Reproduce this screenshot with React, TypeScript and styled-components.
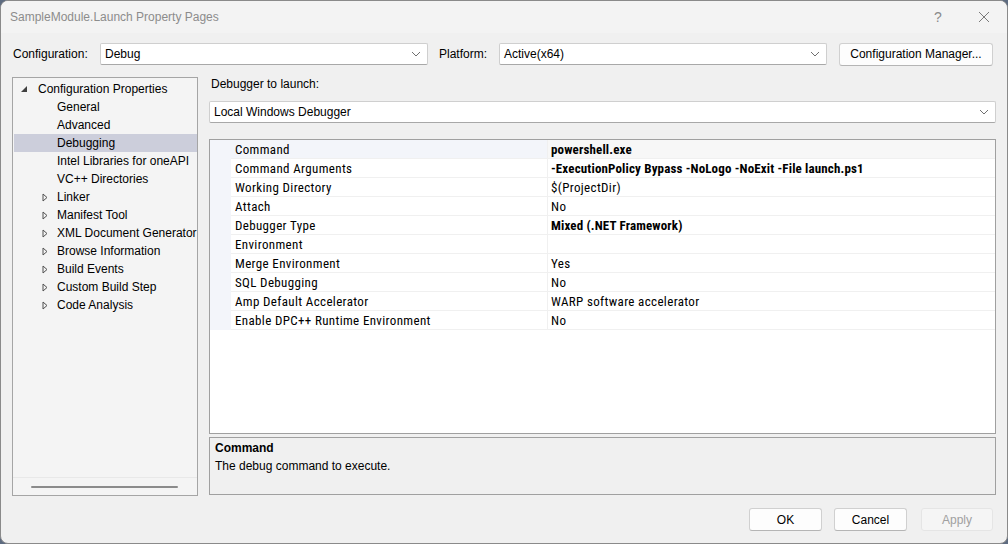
import React from "react";
import styled, { createGlobalStyle } from "styled-components";

const Global = createGlobalStyle`
  html, body { margin: 0; padding: 0; }
  body { background: #5d6b80; width: 1008px; height: 544px; overflow: hidden;
    font-family: "Segoe UI", "Liberation Sans", Arial, sans-serif; font-size: 12px; color: #000; }
`;

const Window = styled.div`
  width: 1006px; height: 542px; background: #f0f0f0; border: 1px solid #8a8a8a;
  border-radius: 8px; overflow: hidden; display: flex; flex-direction: column;
`;
const TitleBar = styled.div`
  height: 32px; display: flex; align-items: center; padding-left: 9px;
  background: #f3f3f3; color: #8c8c8c; font-size: 12px;
`;
const TitleText = styled.div` flex: 1; `;
const TitleBtn = styled.div<{ $big?: boolean }>`
  width: 46px; height: 32px; display: flex; align-items: center; justify-content: center; color: #8a8a8a;
  font-size: ${p => (p.$big ? 14 : 12)}px;
`;
const Body = styled.div`
  flex: 1; display: flex; flex-direction: column; padding: 9px 11px 12px 11px;
`;
const ConfigRow = styled.div`
  display: flex; align-items: center; height: 24px;
`;
const Label = styled.span<{ $w: number; $ml?: number }>`
  width: ${p => p.$w}px; padding-left: 1px; margin-left: ${p => p.$ml ?? 0}px; box-sizing: border-box;
`;
const Combo = styled.div<{ $w?: number }>`
  ${p => (p.$w ? `width: ${p.$w}px;` : "flex: 1;")}
  height: 20px; border: 1px solid #cfcfcf; border-bottom-color: #a8a8a8; background: #fff;
  border-radius: 2px; display: flex; align-items: center; padding: 0 0 0 4px; box-sizing: content-box;
`;
const ComboText = styled.span` flex: 1; `;
const Chevron = () => (
  <svg width="22" height="20" viewBox="0 0 22 20"><path d="M7 8 L11 12 L15 8" fill="none" stroke="#707070" strokeWidth="1" /></svg>
);
const Button = styled.button<{ $disabled?: boolean; $w: number; $ml?: number }>`
  font: inherit; height: 23px; width: ${p => p.$w}px; margin-left: ${p => p.$ml ?? 0}px; border-radius: 3px;
  background: ${p => (p.$disabled ? "#f5f5f5" : "#fdfdfd")};
  border: 1px solid ${p => (p.$disabled ? "#e5e5e5" : "#d0d0d0")};
  border-bottom-color: ${p => (p.$disabled ? "#e5e5e5" : "#b5b5b5")};
  color: ${p => (p.$disabled ? "#a0a0a0" : "#000")}; padding: 0;
`;
const Main = styled.div`
  flex: 1; display: flex; margin-top: 11px; gap: 11px;
`;
const Tree = styled.div`
  width: 184px; border: 1px solid #a5a5a5; background: #f4f4f4; display: flex; flex-direction: column;
`;
const TreeList = styled.div` flex: 1; padding-top: 2px; padding-left: 1px; `;
const TreeItem = styled.div<{ $pad: number; $sel?: boolean }>`
  height: 18px; display: flex; align-items: center; padding-left: ${p => p.$pad}px;
  background: ${p => (p.$sel ? "#cccedb" : "transparent")}; white-space: nowrap;
`;
const Twisty = styled.span<{ $mr: number }>`
  width: 14px; margin-right: ${p => p.$mr}px; display: inline-flex; align-items: center; justify-content: center;
`;
const HScroll = styled.div`
  height: 17px; border-top: 1px solid #e8e8e8; display: flex; align-items: center; padding-left: 18px;
`;
const Thumb = styled.div` width: 147px; height: 2px; background: #8b8b8b; border-radius: 1px; `;
const Right = styled.div` flex: 1; display: flex; flex-direction: column; `;
const SmallLabel = styled.div` height: 16px; padding-left: 2px; `;
const ComboRow = styled.div` display: flex; margin-top: 8px; `;
const Grid = styled.div`
  margin-top: 16px; height: 293px; border: 1px solid #a0a0a0; background: #fff; display: flex; flex-direction: column;
`;
const GridRow = styled.div`
  height: 19px; display: flex; font-family: "Roboto Condensed", "Liberation Sans Narrow", "Liberation Sans", sans-serif;
  font-size: 13px;
`;
const Margin = styled.div` width: 21px; background: #f3f5fa; `;
const NameCell = styled.div<{ $sel?: boolean }>`
  width: 312px; padding-left: 4px; display: flex; align-items: center; border-bottom: 1px solid #f0f0f0;
  background: ${p => (p.$sel ? "#f3f5fa" : "#fff")}; border-right: 1px solid #f0f0f0; letter-spacing: 0.35px;
  padding-top: 1px;
`;
const ValueCell = styled.div<{ $bold?: boolean; $sel?: boolean }>`
  flex: 1; padding-left: 3px; display: flex; align-items: center; border-bottom: 1px solid #f0f0f0;
  font-weight: ${p => (p.$bold ? 700 : 400)}; background: ${p => (p.$sel ? "#f7f7f7" : "#fff")};
  letter-spacing: ${p => (p.$bold ? 0.15 : 0.35)}px; padding-top: 1px;
`;
const Fill = styled.div` flex: 1; `;
const Desc = styled.div`
  margin-top: 3px; height: 58px; border: 1px solid #a0a0a0; background: #f0f0f0; padding: 3px 5px; box-sizing: border-box;
`;
const DescTitle = styled.div` font-weight: 700; height: 18px; `;
const Footer = styled.div`
  display: flex; justify-content: flex-end; margin-top: 12px; padding-right: 3px;
`;

const treeChildren = ["General", "Advanced", "Debugging", "Intel Libraries for oneAPI", "VC++ Directories"];
const treeGroups = ["Linker", "Manifest Tool", "XML Document Generator", "Browse Information", "Build Events", "Custom Build Step", "Code Analysis"];

const rows: [string, string, boolean?][] = [
  ["Command", "powershell.exe", true],
  ["Command Arguments", "-ExecutionPolicy Bypass -NoLogo -NoExit -File launch.ps1", true],
  ["Working Directory", "$(ProjectDir)"],
  ["Attach", "No"],
  ["Debugger Type", "Mixed (.NET Framework)", true],
  ["Environment", ""],
  ["Merge Environment", "Yes"],
  ["SQL Debugging", "No"],
  ["Amp Default Accelerator", "WARP software accelerator"],
  ["Enable DPC++ Runtime Environment", "No"],
];

export default function App() {
  return (
    <>
      <Global />
      <Window>
        <TitleBar>
          <TitleText>SampleModule.Launch Property Pages</TitleText>
          <TitleBtn $big>?</TitleBtn>
          <TitleBtn>
            <svg width="12" height="12" viewBox="0 0 12 12"><path d="M1 1 L11 11 M11 1 L1 11" stroke="#7a7a7a" strokeWidth="1" /></svg>
          </TitleBtn>
        </TitleBar>
        <Body>
          <ConfigRow>
            <Label $w={88}>Configuration:</Label>
            <Combo $w={322}><ComboText>Debug</ComboText><Chevron /></Combo>
            <Label $w={61} $ml={10}>Platform:</Label>
            <Combo $w={322}><ComboText>Active(x64)</ComboText><Chevron /></Combo>
            <Button $w={154} $ml={12}>Configuration Manager...</Button>
          </ConfigRow>
          <Main>
            <Tree>
              <TreeList>
                <TreeItem $pad={3}>
                  <Twisty $mr={7}>
                    <svg width="8" height="8" viewBox="0 0 8 8"><path d="M7 1 L7 7 L1 7 Z" fill="#404040" /></svg>
                  </Twisty>
                  Configuration Properties
                </TreeItem>
                {treeChildren.map(t => (
                  <TreeItem key={t} $pad={43} $sel={t === "Debugging"}>{t}</TreeItem>
                ))}
                {treeGroups.map(t => (
                  <TreeItem key={t} $pad={24}>
                    <Twisty $mr={5}>
                      <svg width="8" height="9" viewBox="0 0 8 9"><path d="M2 1 L6 4.5 L2 8 Z" fill="none" stroke="#505050" strokeWidth="1" /></svg>
                    </Twisty>
                    {t}
                  </TreeItem>
                ))}
              </TreeList>
              <HScroll><Thumb /></HScroll>
            </Tree>
            <Right>
              <SmallLabel>Debugger to launch:</SmallLabel>
              <ComboRow>
                <Combo><ComboText>Local Windows Debugger</ComboText><Chevron /></Combo>
              </ComboRow>
              <Grid>
                {rows.map(([n, v, b], i) => (
                  <GridRow key={n}>
                    <Margin />
                    <NameCell $sel={i === 0}>{n}</NameCell>
                    <ValueCell $bold={b} $sel={i === 0}>{v}</ValueCell>
                  </GridRow>
                ))}
                <Fill />
              </Grid>
              <Desc>
                <DescTitle>Command</DescTitle>
                <div>The debug command to execute.</div>
              </Desc>
            </Right>
          </Main>
          <Footer>
            <Button $w={73}>OK</Button>
            <Button $w={73} $ml={12}>Cancel</Button>
            <Button $w={72} $ml={14} $disabled>Apply</Button>
          </Footer>
        </Body>
      </Window>
    </>
  );
}
